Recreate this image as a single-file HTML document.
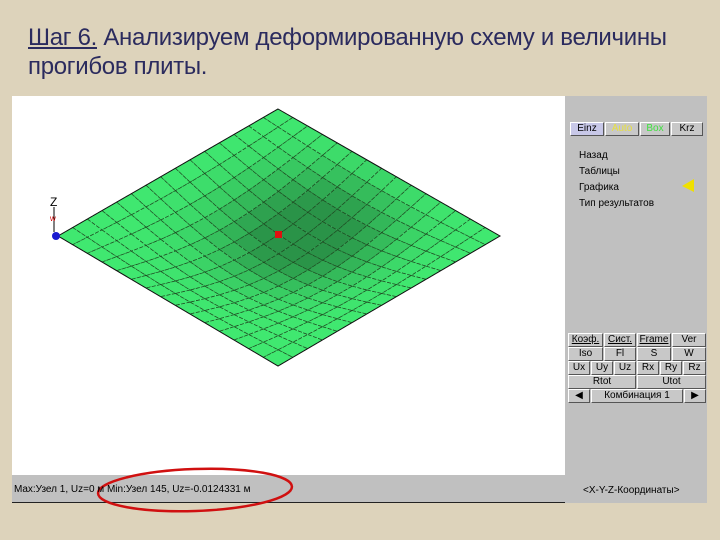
<!DOCTYPE html>
<html><head><meta charset="utf-8"><style>
body{margin:0;width:720px;height:540px;overflow:hidden;background:#ddd3bb;font-family:"Liberation Sans",sans-serif;position:relative}
.t{position:absolute;left:28px;top:23px;font-size:24px;line-height:29px;color:#2b2b5e;white-space:nowrap;letter-spacing:-0.3px}
.a{position:absolute}
.btn{position:absolute;background:#c8c8c8;border-top:1px solid #fff;border-left:1px solid #fff;border-right:1px solid #555;border-bottom:1px solid #555;font-size:10px;text-align:center;line-height:12px;height:12px;box-sizing:content-box}
.m{position:absolute;left:579px;font-size:10px;color:#000}
</style></head><body>
<div class="t"><u>Шаг 6.</u> Анализируем деформированную схему и величины<br>прогибов плиты.</div>
<div class="a" style="left:12px;top:96px;width:553px;height:379px;background:#fff"></div>
<div class="a" style="left:12px;top:475px;width:553px;height:27px;background:#c0c0c0;border-bottom:1px solid #222"></div>
<div class="a" style="left:565px;top:96px;width:142px;height:407px;background:#c0c0c0"></div>
<svg class="a" style="left:0;top:0" width="720" height="540" id="sv"></svg>
<div class="a" style="left:14px;top:484px;font-size:10px;white-space:nowrap">Max:Узел 1, Uz=0 м Min:Узел 145, Uz=-0.0124331 м</div>
<div class="a" style="left:583px;top:485px;font-size:10px;white-space:nowrap">&lt;X-Y-Z-Координаты&gt;</div>
<div class="btn" style="left:570px;top:122px;width:32px;background:#c8c8e8">Einz</div>
<div class="btn" style="left:605px;top:122px;width:32px;color:#e8e040">Auto</div>
<div class="btn" style="left:640px;top:122px;width:28px;color:#40e040">Box</div>
<div class="btn" style="left:671px;top:122px;width:30px">Krz</div>
<div class="m" style="top:150px">Назад</div>
<div class="m" style="top:166px">Таблицы</div>
<div class="m" style="top:182px">Графика</div>
<div class="m" style="top:198px">Тип результатов</div>
<div class="btn" style="left:568px;top:333px;width:33px;text-decoration:underline">Коэф.</div>
<div class="btn" style="left:604px;top:333px;width:30px;text-decoration:underline">Сист.</div>
<div class="btn" style="left:637px;top:333px;width:32px;text-decoration:underline">Frame</div>
<div class="btn" style="left:672px;top:333px;width:32px">Ver</div>
<div class="btn" style="left:568px;top:347px;width:33px">Iso</div>
<div class="btn" style="left:604px;top:347px;width:30px">Fl</div>
<div class="btn" style="left:637px;top:347px;width:32px">S</div>
<div class="btn" style="left:672px;top:347px;width:32px">W</div>
<div class="btn" style="left:568px;top:361px;width:20px">Ux</div>
<div class="btn" style="left:591px;top:361px;width:20px">Uy</div>
<div class="btn" style="left:614px;top:361px;width:20px">Uz</div>
<div class="btn" style="left:637px;top:361px;width:20px">Rx</div>
<div class="btn" style="left:660px;top:361px;width:20px">Ry</div>
<div class="btn" style="left:683px;top:361px;width:21px">Rz</div>
<div class="btn" style="left:568px;top:375px;width:66px">Rtot</div>
<div class="btn" style="left:637px;top:375px;width:67px">Utot</div>
<div class="btn" style="left:568px;top:389px;width:20px">◀</div>
<div class="btn" style="left:591px;top:389px;width:90px">Комбинация 1</div>
<div class="btn" style="left:684px;top:389px;width:20px">▶</div>
<script>
var s=document.getElementById('sv'),h='';
var T=[278,109],L=[58,236],R=[500,236],B=[278,366],N=15,S=26;
function P(u,v){var x=T[0]+(R[0]-T[0])*u+(L[0]-T[0])*v,y=T[1]+(R[1]-T[1])*u+(L[1]-T[1])*v;
 x+= (B[0]-R[0]-L[0]+T[0])*u*v; y+=(B[1]-R[1]-L[1]+T[1])*u*v;
 y+=S*Math.sin(Math.PI*u)*Math.sin(Math.PI*v);return[x,y];}
for(var i=0;i<N;i++)for(var j=0;j<N;j++){
 var a=P(i/N,j/N),b=P((i+1)/N,j/N),c=P((i+1)/N,(j+1)/N),d=P(i/N,(j+1)/N);
 var uc=(i+.5)/N,vc=(j+.5)/N;
 var f=Math.exp(-((uc-0.45)*(uc-0.45)+(vc-0.28)*(vc-0.28))/0.12)*Math.sin(Math.PI*uc)*Math.pow(Math.sin(Math.PI*vc),0.6);
 f=Math.min(1,f*1.4);
 var r=Math.round(64-22*f),g=Math.round(232-85*f),bb=Math.round(112-40*f);
 h+='<polygon points="'+a+' '+b+' '+c+' '+d+'" fill="rgb('+r+','+g+','+bb+')" stroke="#1f4a22" stroke-width="0.7" stroke-dasharray="4 1.5"/>';}
h+='<polygon points="'+T+' '+R+' '+B+' '+L+'" fill="none" stroke="#111" stroke-width="1"/>';
h+='<circle cx="56" cy="236" r="4" fill="#1a1ad0"/><rect x="275" y="231" width="7" height="7" fill="#e01010"/>';
h+='<text x="50" y="206" font-size="12" font-family="Liberation Sans">Z</text><line x1="54" y1="207" x2="54" y2="232" stroke="#000"/>';
h+='<text x="50" y="221" font-size="8" fill="#c00" font-family="Liberation Sans">w</text>';
h+='<polygon points="682,180 694,186 682,193" fill="#f0e000" transform="rotate(180 688 186)"/>';
h+='<ellipse cx="195" cy="490" rx="97" ry="21" fill="none" stroke="#d01010" stroke-width="2.5" transform="rotate(-2 195 490)"/>';
s.innerHTML=h;
</script>
</body></html>
